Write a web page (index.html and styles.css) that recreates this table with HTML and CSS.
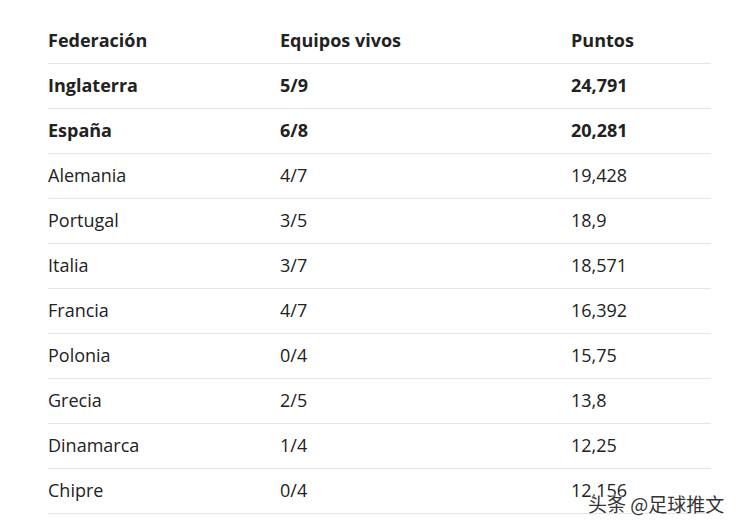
FILE: index.html
```html
<!DOCTYPE html>
<html lang="es">
<head>
<meta charset="utf-8">
<link rel="stylesheet" href="styles.css">
</head>
<body>
<div class="table">
  <div class="row head"><div>Federación</div><div>Equipos vivos</div><div>Puntos</div></div>
  <div class="row strong"><div>Inglaterra</div><div>5/9</div><div>24,791</div></div>
  <div class="row strong"><div>España</div><div>6/8</div><div>20,281</div></div>
  <div class="row"><div>Alemania</div><div>4/7</div><div>19,428</div></div>
  <div class="row"><div>Portugal</div><div>3/5</div><div>18,9</div></div>
  <div class="row"><div>Italia</div><div>3/7</div><div>18,571</div></div>
  <div class="row"><div>Francia</div><div>4/7</div><div>16,392</div></div>
  <div class="row"><div>Polonia</div><div>0/4</div><div>15,75</div></div>
  <div class="row"><div>Grecia</div><div>2/5</div><div>13,8</div></div>
  <div class="row"><div>Dinamarca</div><div>1/4</div><div>12,25</div></div>
  <div class="row"><div>Chipre</div><div>0/4</div><div>12,156</div></div>
</div>
<div class="watermark">头条 @足球推文</div>
</body>
</html>
```
FILE: styles.css
```css
html, body { margin: 0; padding: 0; background: #fff; }
body {
  font-family: "Open Sans", "Noto Sans", sans-serif;
  color: #222;
  width: 739px;
  height: 530px;
  overflow: hidden;
  position: relative;
}
.table {
  margin: 19px 0 0 48px;
  width: 663px;
}
.row {
  display: grid;
  grid-template-columns: 232px 291px 140px;
  height: 44px;
  box-sizing: content-box;
  align-items: center;
  border-bottom: 1px solid #e6e6e6;
  font-size: 18px;
  line-height: 42px;
}
.row > div { padding-bottom: 2px; }
.head, .strong { font-weight: 700; }
.watermark {
  position: absolute;
  left: 588px;
  top: 490px;
  font-family: "Noto Sans CJK SC", sans-serif;
  font-size: 19px;
  color: #333;
  text-shadow: 0 0 2px #fff, 0 0 2px #fff, 0 0 2px #fff;
  white-space: nowrap;
}
```
